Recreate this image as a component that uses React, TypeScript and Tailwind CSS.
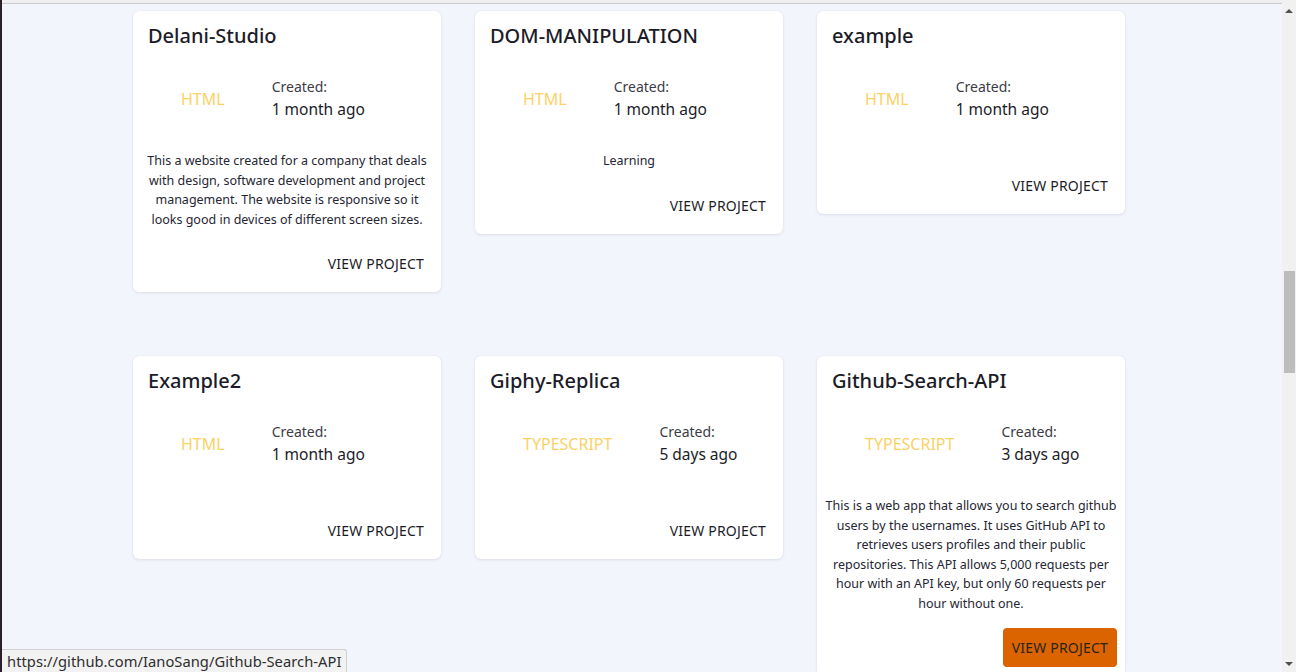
import React from "react";

type Project = {
  name: string;
  lang: string;
  created: string;
  desc: string;
  hover?: boolean;
};

const projects: Project[] = [
  {
    name: "Delani-Studio",
    lang: "HTML",
    created: "1 month ago",
    desc: "This a website created for a company that deals with design, software development and project management. The website is responsive so it looks good in devices of different screen sizes.",
  },
  { name: "DOM-MANIPULATION", lang: "HTML", created: "1 month ago", desc: "Learning" },
  { name: "example", lang: "HTML", created: "1 month ago", desc: "" },
  { name: "Example2", lang: "HTML", created: "1 month ago", desc: "" },
  { name: "Giphy-Replica", lang: "TYPESCRIPT", created: "5 days ago", desc: "" },
  {
    name: "Github-Search-API",
    lang: "TYPESCRIPT",
    created: "3 days ago",
    desc: "This is a web app that allows you to search github users by the usernames. It uses GitHub API to retrieves users profiles and their public repositories. This API allows 5,000 requests per hour with an API key, but only 60 requests per hour without one.",
    hover: true,
  },
];

function Card({ p }: { p: Project }) {
  return (
    <div className="flex flex-col rounded-[6px] bg-white shadow-[0_1px_3px_rgba(60,64,110,0.12),0_0_1px_rgba(60,64,110,0.1)]">
      <div className="px-[15px] pt-[13px] text-[20px] leading-[24px] font-medium text-[#1c1c28]">
        {p.name}
      </div>
      <div className="mt-[29px] flex items-center px-[15px]">
        <div className="pl-[33px] text-[16px] leading-[24px] text-[#fcd166]">{p.lang}</div>
        <div className="ml-[47px] flex flex-col">
          <span className="text-[14px] leading-[20px] text-[#3c3c46]">Created:</span>
          <span className="text-[15.5px] leading-[24px] text-[#1c1c28]">{p.created}</span>
        </div>
      </div>
      <div className="px-[7px] pt-[30px] pb-[15px] text-center text-[12.5px] leading-[19.5px] text-[#262633]">
        {p.desc}
      </div>
      <div className="flex justify-end px-[8px] pb-[9px]">
        <button
          className={
            p.hover
              ? "flex h-[39px] items-center rounded-[4px] bg-[#db6401] px-[9px] text-[14px] tracking-[0.2px] text-[#2a2418]"
              : "flex h-[39px] items-center rounded-[4px] px-[9px] text-[14px] tracking-[0.2px] text-[#1c1c28]"
          }
        >
          VIEW PROJECT
        </button>
      </div>
    </div>
  );
}

export default function App() {
  return (
    <div
      className="relative flex h-[672px] w-[1296px] overflow-hidden bg-[#f3f5fd]"
      style={{ fontFamily: '"Noto Sans", "Open Sans", sans-serif' }}
    >
      <div className="w-[2px] shrink-0 bg-[#2b1f2b]" />
      <div className="flex min-w-0 flex-1 flex-col">
        <div className="h-[4px] shrink-0 border-b border-[#c9c9cc] bg-[#efeff2]" />
        <div className="pt-[7px] pl-[131px]">
          <div className="grid grid-cols-[308px_308px_308px] items-start gap-x-[34px] gap-y-[64px]">
            {projects.map((p) => (
              <Card key={p.name} p={p} />
            ))}
          </div>
        </div>
      </div>
      <div className="flex w-[14px] shrink-0 flex-col items-center bg-[#f1f1f1]">
        <div className="mt-[9px] h-0 w-0 border-x-[4px] border-b-[4px] border-x-transparent border-b-[#505050]" />
        <div className="mt-[258px] h-[102px] w-[11px] bg-[#bdbdbd]" />
        <div className="mt-auto mb-[6px] h-0 w-0 border-x-[4px] border-t-[4px] border-x-transparent border-t-[#505050]" />
      </div>
      <div className="absolute bottom-0 left-[2px] flex h-[23px] items-center rounded-tr-[3px] border border-b-0 border-l-0 border-[#d0d0d0] bg-[#f2f2f2] pr-[5px] pl-[5px] text-[14.7px] tracking-[0.05px] text-[#2e2e2e]">
        https://github.com/IanoSang/Github-Search-API
      </div>
    </div>
  );
}
